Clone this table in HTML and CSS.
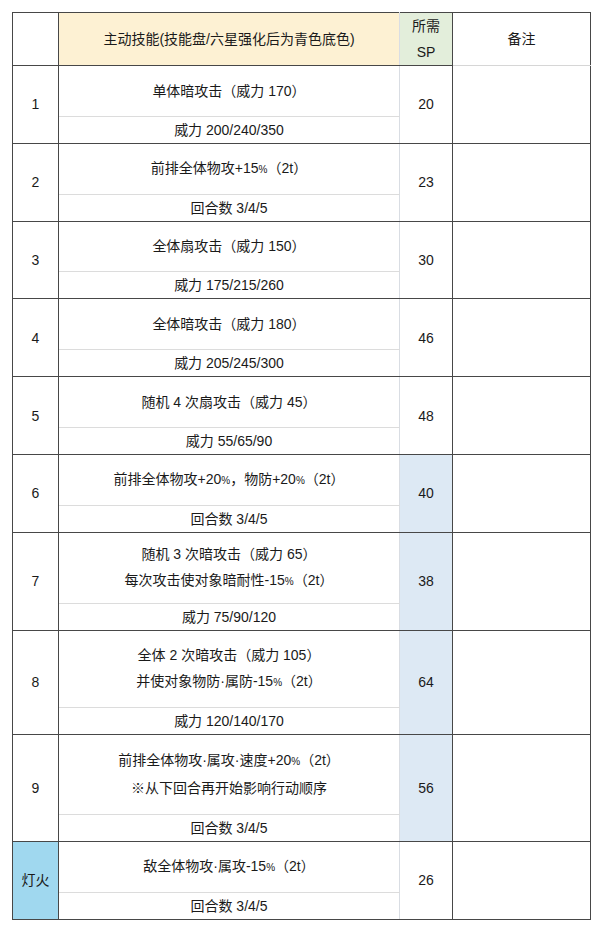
FILE: index.html
```html
<!DOCTYPE html>
<html lang="zh">
<head>
<meta charset="utf-8">
<title>主动技能</title>
<link rel="stylesheet" href="styles.css">
</head>
<body>
<table class="skills">
  <colgroup>
    <col class="c-idx"><col class="c-skill"><col class="c-sp"><col class="c-note">
  </colgroup>
  <tr class="head">
    <th class="idx"></th>
    <th class="skill-h">主动技能(技能盘/六星强化后为青色底色)</th>
    <th class="sp-h">所需<br>SP</th>
    <th class="note note-h">备注</th>
  </tr>

  <tr class="top h1">
    <td class="idx" rowspan="2">1</td>
    <td class="main">单体暗攻击（威力 170）</td>
    <td class="sp" rowspan="2">20</td>
    <td class="note light-top" rowspan="2"></td>
  </tr>
  <tr class="sub"><td class="subc">威力 200/240/350</td></tr>

  <tr class="top h1">
    <td class="idx" rowspan="2">2</td>
    <td class="main">前排全体物攻+15<span class="pct">%</span>（2t）</td>
    <td class="sp" rowspan="2">23</td>
    <td class="note light-top" rowspan="2"></td>
  </tr>
  <tr class="sub"><td class="subc">回合数 3/4/5</td></tr>

  <tr class="top h1">
    <td class="idx" rowspan="2">3</td>
    <td class="main">全体扇攻击（威力 150）</td>
    <td class="sp" rowspan="2">30</td>
    <td class="note" rowspan="2"></td>
  </tr>
  <tr class="sub"><td class="subc">威力 175/215/260</td></tr>

  <tr class="top h1">
    <td class="idx" rowspan="2">4</td>
    <td class="main">全体暗攻击（威力 180）</td>
    <td class="sp" rowspan="2">46</td>
    <td class="note" rowspan="2"></td>
  </tr>
  <tr class="sub"><td class="subc">威力 205/245/300</td></tr>

  <tr class="top h1">
    <td class="idx" rowspan="2">5</td>
    <td class="main">随机 4 次扇攻击（威力 45）</td>
    <td class="sp" rowspan="2">48</td>
    <td class="note" rowspan="2"></td>
  </tr>
  <tr class="sub"><td class="subc">威力 55/65/90</td></tr>

  <tr class="top h1">
    <td class="idx" rowspan="2">6</td>
    <td class="main">前排全体物攻+20<span class="pct">%</span>，物防+20<span class="pct">%</span>（2t）</td>
    <td class="sp blue" rowspan="2">40</td>
    <td class="note" rowspan="2"></td>
  </tr>
  <tr class="sub"><td class="subc">回合数 3/4/5</td></tr>

  <tr class="top h7">
    <td class="idx" rowspan="2">7</td>
    <td class="main">随机 3 次暗攻击（威力 65）<br>每次攻击使对象暗耐性-15<span class="pct">%</span>（2t）</td>
    <td class="sp blue" rowspan="2">38</td>
    <td class="note light-top" rowspan="2"></td>
  </tr>
  <tr class="sub s27"><td class="subc">威力 75/90/120</td></tr>

  <tr class="top h8">
    <td class="idx" rowspan="2">8</td>
    <td class="main">全体 2 次暗攻击（威力 105）<br>并使对象物防·属防-15<span class="pct">%</span>（2t）</td>
    <td class="sp blue" rowspan="2">64</td>
    <td class="note light-top" rowspan="2"></td>
  </tr>
  <tr class="sub s27"><td class="subc">威力 120/140/170</td></tr>

  <tr class="top h9">
    <td class="idx" rowspan="2">9</td>
    <td class="main">前排全体物攻·属攻·速度+20<span class="pct">%</span>（2t）<br>※从下回合再开始影响行动顺序</td>
    <td class="sp blue" rowspan="2">56</td>
    <td class="note light-top" rowspan="2"></td>
  </tr>
  <tr class="sub"><td class="subc">回合数 3/4/5</td></tr>

  <tr class="top h1">
    <td class="idx fire" rowspan="2">灯火</td>
    <td class="main">敌全体物攻·属攻-15<span class="pct">%</span>（2t）</td>
    <td class="sp" rowspan="2">26</td>
    <td class="note light-top" rowspan="2"></td>
  </tr>
  <tr class="sub last"><td class="subc">回合数 3/4/5</td></tr>
</table>
</body>
</html>
```

FILE: styles.css
```css
html, body {
  margin: 0;
  padding: 0;
  background: #ffffff;
}

body {
  padding: 12px 0 0 12px;
  font-family: "Liberation Sans", "Noto Sans CJK SC", sans-serif;
  font-size: 14px;
  color: #1a1a1a;
}

.skills {
  border-collapse: collapse;
  table-layout: fixed;
  width: 578px;
}

.c-idx { width: 46px; }
.c-skill { width: 341px; }
.c-sp { width: 53px; }
.c-note { width: 138px; }

.skills th,
.skills td {
  border: 1px solid #474747;
  padding: 0;
  text-align: center;
  vertical-align: middle;
  line-height: 26px;
  font-weight: 400;
}

.head { height: 51px; }

.skill-h {
  background: #fdf1d3;
  border-right-color: #d9dde3 !important;
}

.sp-h {
  background: #e3eedb;
  border-left-color: #d9dde3 !important;
}

.note-h { border-bottom-color: #d6d6d6 !important; }

.h1 { height: 50.8px; }
.h7 { height: 71px; }
.h8 { height: 77px; }
.h9 { height: 80px; }
.sub { height: 25.3px; }
.sub.s27 { height: 26.3px; }
.sub.last { height: 24px; }

.skills td.main {
  border-bottom: 1px solid #dcdcdc;
  border-right: 1px solid #d9dde3;
}

.skills td.subc {
  border-top: 1px solid #dcdcdc;
  border-right: 1px solid #d9dde3;
}

.skills td.sp {
  border-left: 1px solid #d9dde3;
}

.sp.blue { background: #dde9f4; }

.skills td.note.light-top { border-top-color: #d6d6d6; }

.idx.fire { background: #a0d8ef; }

.pct {
  font-size: 10px;
  vertical-align: baseline;
}
```
